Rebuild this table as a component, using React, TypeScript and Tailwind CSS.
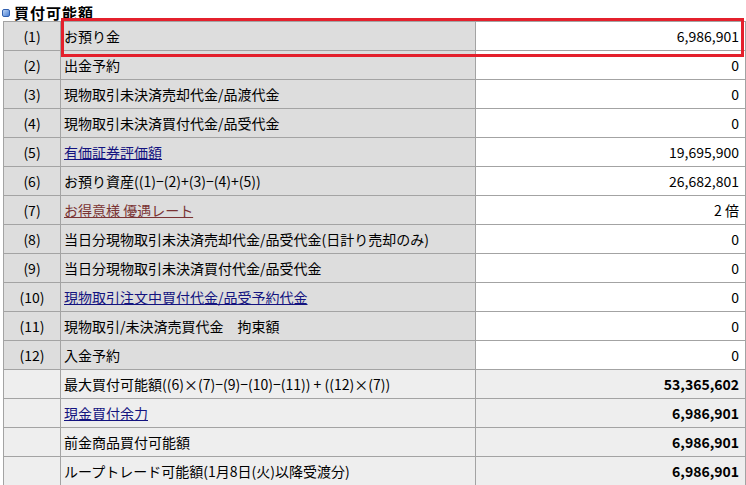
import React from 'react';

type Row = {
  no?: string;
  label: string;
  value: string;
  link?: 'blue' | 'brown';
  bold?: boolean;
};

const rows: Row[] = [
  { no: '(1)', label: 'お預り金', value: '6,986,901' },
  { no: '(2)', label: '出金予約', value: '0' },
  { no: '(3)', label: '現物取引未決済売却代金/品渡代金', value: '0' },
  { no: '(4)', label: '現物取引未決済買付代金/品受代金', value: '0' },
  { no: '(5)', label: '有価証券評価額', value: '19,695,900', link: 'blue' },
  { no: '(6)', label: 'お預り資産((1)−(2)+(3)−(4)+(5))', value: '26,682,801' },
  { no: '(7)', label: 'お得意様 優遇レート', value: '2 倍', link: 'brown' },
  { no: '(8)', label: '当日分現物取引未決済売却代金/品受代金(日計り売却のみ)', value: '0' },
  { no: '(9)', label: '当日分現物取引未決済買付代金/品受代金', value: '0' },
  { no: '(10)', label: '現物取引注文中買付代金/品受予約代金', value: '0', link: 'blue' },
  { no: '(11)', label: '現物取引/未決済売買代金\u3000拘束額', value: '0' },
  { no: '(12)', label: '入金予約', value: '0' },
  { label: '最大買付可能額((6)×(7)−(9)−(10)−(11)) + ((12)×(7))', value: '53,365,602', bold: true },
  { label: '現金買付余力', value: '6,986,901', link: 'blue', bold: true },
  { label: '前金商品買付可能額', value: '6,986,901', bold: true },
  { label: 'ループトレード可能額(1月8日(火)以降受渡分)', value: '6,986,901', bold: true },
];

const font = { fontFamily: '"MS PGothic", "Noto Sans CJK JP", "Liberation Sans", sans-serif' };

export default function App() {
  return (
    <div className="relative w-[746px] h-[485px] bg-white overflow-hidden text-[14px] text-black" style={font}>
      <div className="flex items-center h-[21px] pl-[2px] gap-[4px]">
        <span className="mt-[4px] w-[8px] h-[8px] rounded-[2px] border border-[#2f5fb0] bg-gradient-to-br from-[#bcd4f5] to-[#4a7fd2]" />
        <span className="font-bold text-[15px] leading-none tracking-[1px] mt-[3px]">買付可能額</span>
      </div>
      <table className="ml-[3px] w-[743px] border-collapse table-fixed">
        <colgroup>
          <col className="w-[57px]" />
          <col className="w-[415px]" />
          <col />
        </colgroup>
        <tbody>
          {rows.map((r, i) => {
            const summary = !r.no;
            const bg = summary ? 'bg-[#eeeeee]' : 'bg-[#dddddd]';
            const valBg = summary ? 'bg-[#eeeeee]' : 'bg-white';
            const linkCls =
              r.link === 'blue'
                ? 'text-[#13137f] underline'
                : r.link === 'brown'
                ? 'text-[#7a3333] underline'
                : '';
            return (
              <tr key={i} className="h-[29px]">
                <td className={`border border-[#a3a3a3] ${bg} text-center p-0`}>{r.no}</td>
                <td className={`border border-[#a3a3a3] ${bg} pl-[3px] p-0 whitespace-nowrap`}>
                  <span className={linkCls}>{r.label}</span>
                </td>
                <td
                  className={`border border-[#a3a3a3] ${valBg} text-right pr-[6px] p-0 ${
                    r.bold ? 'font-bold' : ''
                  }`}
                >
                  {r.value}
                </td>
              </tr>
            );
          })}
        </tbody>
      </table>
      <div className="absolute left-[61px] top-[18px] w-[683px] h-[39px] border-[3px] border-[#e4202c]" />
    </div>
  );
}
